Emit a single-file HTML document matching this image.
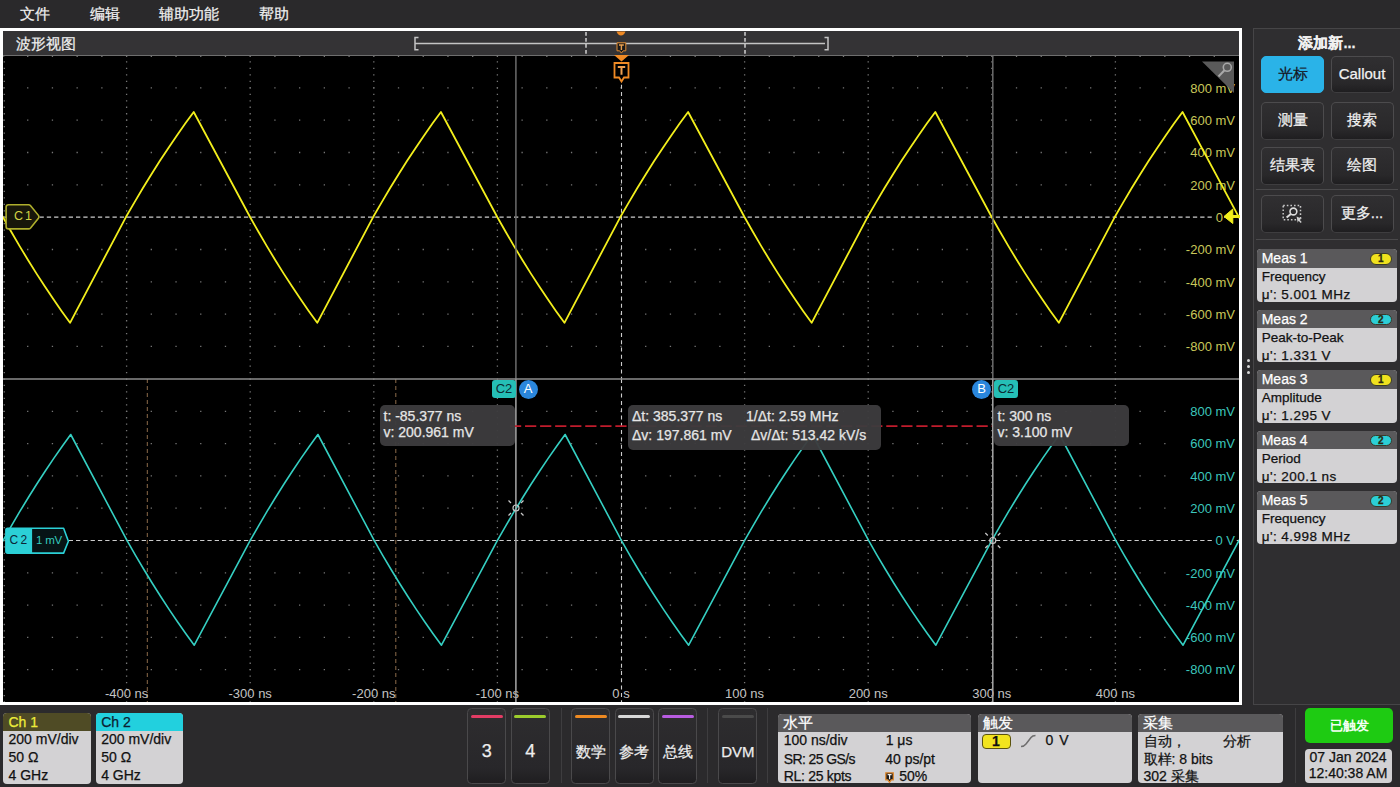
<!DOCTYPE html>
<html><head><meta charset="utf-8">
<style>
*{margin:0;padding:0;box-sizing:border-box}
html,body{width:1400px;height:787px;overflow:hidden;background:#2b2a2c;font-family:"Liberation Sans",sans-serif;color:#fff}
#rp,.card,.bb,.rb,#menu,#title .t{-webkit-text-stroke:0.25px currentColor}
.a{position:absolute}
#menu{left:0;top:0;width:1400px;height:28px;background:#2a292b}
#menu span{position:absolute;top:5px;font-size:15px;color:#f0f0f0;line-height:18px}
#wv{left:0;top:28px;width:1242px;height:677px;background:#fff}
#wvin{left:3px;top:31px;width:1236px;height:671px;background:#000}
#title{left:3px;top:31px;width:1236px;height:24.5px;background:#343335;border-bottom:1px solid #6e6e6e}
#title .t{position:absolute;left:13px;top:4px;font-size:15px;color:#eee;line-height:17px}
svg.plot{position:absolute;left:0;top:0;width:1400px;height:787px}
.yl{position:absolute;left:1136px;width:100px;text-align:right;font-size:13px;line-height:16px}
.yl span{background:#000;padding:0 1px 0 3px}
.xl{position:absolute;top:685.5px;width:80px;text-align:center;font-size:13px;line-height:16px;color:#c4c4c4}
#rp{left:1253px;top:28px;width:147px;height:677px;background:#2f2e30;border-left:1px solid #464547;border-top:1px solid #464547;border-bottom:1px solid #464547}
.btn{position:absolute;width:63px;height:37.7px;border-radius:5px;background:linear-gradient(#302f31,#29282a 75%,#1f1e20);border:1.5px solid #4c4b4d;border-bottom-color:#3e3d3f;font-size:15px;color:#f2f2f2;text-align:center;line-height:34px}
.card{position:absolute;border-radius:4px;background:#d3d2d4;overflow:hidden;color:#111}
.card .h{position:absolute;left:0;top:0;right:0;background:#5a595b;color:#fff}
.meas{left:3px;width:140px;height:52.6px}
.meas .h{height:18.3px;font-size:14px;line-height:18px;padding-left:4.7px}
.meas .l1{position:absolute;left:4.7px;top:19px;font-size:13.5px;line-height:17px}
.meas .l2{position:absolute;left:4.7px;top:37px;font-size:13.5px;line-height:17px;letter-spacing:0.45px}
.badge{position:absolute;right:5.5px;top:3.8px;width:21.5px;height:11.5px;border-radius:6px;font-size:10px;font-weight:bold;line-height:10px;text-align:center;color:#2a2a10;border:1px solid #3a3a2a}
.bb{position:absolute;top:708px;width:39px;height:75.5px;border-radius:4.5px;background:linear-gradient(#2e2d2f,#28272a 80%,#1f1e20);border:1.5px solid #4a494b;text-align:center;color:#eee}
.bb i{position:absolute;left:2.5px;right:2.5px;top:6px;height:3px;border-radius:1.5px}
.bb span{position:absolute;left:0;right:0;top:34px;font-size:15px;line-height:18px}
.sep{position:absolute;top:708px;width:1.5px;height:75px;background:#3e3d3f}
.info{position:absolute;top:713.5px;height:69.5px}
.info .h{height:18px;font-size:15px;line-height:18px;padding-left:5px}
.info .r{position:absolute;font-size:14px;line-height:18px}
.rb{position:absolute;border-radius:5px;background:rgba(60,59,61,0.96);color:#e6e6e6;font-size:14px;line-height:16px}
.tag{position:absolute;height:18.5px;font-size:13px;line-height:18.5px;text-align:center}
</style></head><body>
<div id="menu" class="a">
<span style="left:20px">文件</span>
<span style="left:90px">编辑</span>
<span style="left:159px">辅助功能</span>
<span style="left:259px">帮助</span>
</div>

<div id="wv" class="a"></div>
<div id="wvin" class="a"></div>
<div id="title" class="a"><div class="t">波形视图</div>
   <svg class="a" style="left:0;top:0" width="1236" height="25">
    <path d="M415.5 6.5 H412 V18.8 H415.5 M412 12.6 H822 M821.5 6.5 H825 V18.8 H821.5" stroke="#c4c4c4" stroke-width="1.5" fill="none"/>
    <line x1="583" y1="1" x2="583" y2="25" stroke="#d0d0d0" stroke-width="1.5" stroke-dasharray="3.8 2.2"/>
    <line x1="742" y1="1" x2="742" y2="25" stroke="#d0d0d0" stroke-width="1.5" stroke-dasharray="3.8 2.2"/>
    <path d="M613.5 0.5 L622.5 0.5 Q621 4.5 618 4.5 Q615 4.5 613.5 0.5 Z" fill="#f08a24"/>
    <path d="M614 11.8 h8.8 v8 h-2.6 l-1.8 2.3 l-1.8 -2.3 h-2.6 Z" fill="#1a1a1a" stroke="#e08a30" stroke-width="1"/>
    <path d="M616 14 h4.8 M618.4 14 v5" stroke="#e8a050" stroke-width="1.4"/>
   </svg>
</div>
<svg class="plot" viewBox="0 0 1400 787"><defs><clipPath id="cp"><rect x="3" y="55.5" width="1236" height="646.5"/></clipPath></defs><g clip-path="url(#cp)">
<line x1="3" y1="87.83" x2="1237" y2="87.83" stroke="#767676" stroke-width="1.3" stroke-dasharray="1.3 23.42" stroke-dashoffset="0.65"/>
<line x1="3" y1="120.16" x2="1237" y2="120.16" stroke="#767676" stroke-width="1.3" stroke-dasharray="1.3 23.42" stroke-dashoffset="0.65"/>
<line x1="3" y1="152.49" x2="1237" y2="152.49" stroke="#767676" stroke-width="1.3" stroke-dasharray="1.3 23.42" stroke-dashoffset="0.65"/>
<line x1="3" y1="184.82" x2="1237" y2="184.82" stroke="#767676" stroke-width="1.3" stroke-dasharray="1.3 23.42" stroke-dashoffset="0.65"/>
<line x1="3" y1="249.48" x2="1237" y2="249.48" stroke="#767676" stroke-width="1.3" stroke-dasharray="1.3 23.42" stroke-dashoffset="0.65"/>
<line x1="3" y1="281.81" x2="1237" y2="281.81" stroke="#767676" stroke-width="1.3" stroke-dasharray="1.3 23.42" stroke-dashoffset="0.65"/>
<line x1="3" y1="314.14" x2="1237" y2="314.14" stroke="#767676" stroke-width="1.3" stroke-dasharray="1.3 23.42" stroke-dashoffset="0.65"/>
<line x1="3" y1="346.47" x2="1237" y2="346.47" stroke="#767676" stroke-width="1.3" stroke-dasharray="1.3 23.42" stroke-dashoffset="0.65"/>
<line x1="126.6" y1="55.5" x2="126.6" y2="378.8" stroke="#767676" stroke-width="1.3" stroke-dasharray="1.3 5.17" stroke-dashoffset="0.65"/>
<line x1="250.2" y1="55.5" x2="250.2" y2="378.8" stroke="#767676" stroke-width="1.3" stroke-dasharray="1.3 5.17" stroke-dashoffset="0.65"/>
<line x1="373.8" y1="55.5" x2="373.8" y2="378.8" stroke="#767676" stroke-width="1.3" stroke-dasharray="1.3 5.17" stroke-dashoffset="0.65"/>
<line x1="497.4" y1="55.5" x2="497.4" y2="378.8" stroke="#767676" stroke-width="1.3" stroke-dasharray="1.3 5.17" stroke-dashoffset="0.65"/>
<line x1="744.6" y1="55.5" x2="744.6" y2="378.8" stroke="#767676" stroke-width="1.3" stroke-dasharray="1.3 5.17" stroke-dashoffset="0.65"/>
<line x1="868.2" y1="55.5" x2="868.2" y2="378.8" stroke="#767676" stroke-width="1.3" stroke-dasharray="1.3 5.17" stroke-dashoffset="0.65"/>
<line x1="991.8" y1="55.5" x2="991.8" y2="378.8" stroke="#767676" stroke-width="1.3" stroke-dasharray="1.3 5.17" stroke-dashoffset="0.65"/>
<line x1="1115.4" y1="55.5" x2="1115.4" y2="378.8" stroke="#767676" stroke-width="1.3" stroke-dasharray="1.3 5.17" stroke-dashoffset="0.65"/>
<line x1="3" y1="217.15" x2="1239" y2="217.15" stroke="#cccccc" stroke-width="1.1" stroke-dasharray="4.3 3"/>
<line x1="621.5" y1="55.5" x2="621.5" y2="378.8" stroke="#cccccc" stroke-width="1.1" stroke-dasharray="4 3.3"/>
<line x1="3" y1="411.3" x2="1237" y2="411.3" stroke="#767676" stroke-width="1.3" stroke-dasharray="1.3 23.42" stroke-dashoffset="0.65"/>
<line x1="3" y1="443.6" x2="1237" y2="443.6" stroke="#767676" stroke-width="1.3" stroke-dasharray="1.3 23.42" stroke-dashoffset="0.65"/>
<line x1="3" y1="475.9" x2="1237" y2="475.9" stroke="#767676" stroke-width="1.3" stroke-dasharray="1.3 23.42" stroke-dashoffset="0.65"/>
<line x1="3" y1="508.2" x2="1237" y2="508.2" stroke="#767676" stroke-width="1.3" stroke-dasharray="1.3 23.42" stroke-dashoffset="0.65"/>
<line x1="3" y1="572.8" x2="1237" y2="572.8" stroke="#767676" stroke-width="1.3" stroke-dasharray="1.3 23.42" stroke-dashoffset="0.65"/>
<line x1="3" y1="605.1" x2="1237" y2="605.1" stroke="#767676" stroke-width="1.3" stroke-dasharray="1.3 23.42" stroke-dashoffset="0.65"/>
<line x1="3" y1="637.4" x2="1237" y2="637.4" stroke="#767676" stroke-width="1.3" stroke-dasharray="1.3 23.42" stroke-dashoffset="0.65"/>
<line x1="3" y1="669.7" x2="1237" y2="669.7" stroke="#767676" stroke-width="1.3" stroke-dasharray="1.3 23.42" stroke-dashoffset="0.65"/>
<line x1="126.6" y1="379" x2="126.6" y2="702" stroke="#767676" stroke-width="1.3" stroke-dasharray="1.3 5.16" stroke-dashoffset="0.65"/>
<line x1="250.2" y1="379" x2="250.2" y2="702" stroke="#767676" stroke-width="1.3" stroke-dasharray="1.3 5.16" stroke-dashoffset="0.65"/>
<line x1="373.8" y1="379" x2="373.8" y2="702" stroke="#767676" stroke-width="1.3" stroke-dasharray="1.3 5.16" stroke-dashoffset="0.65"/>
<line x1="497.4" y1="379" x2="497.4" y2="702" stroke="#767676" stroke-width="1.3" stroke-dasharray="1.3 5.16" stroke-dashoffset="0.65"/>
<line x1="744.6" y1="379" x2="744.6" y2="702" stroke="#767676" stroke-width="1.3" stroke-dasharray="1.3 5.16" stroke-dashoffset="0.65"/>
<line x1="868.2" y1="379" x2="868.2" y2="702" stroke="#767676" stroke-width="1.3" stroke-dasharray="1.3 5.16" stroke-dashoffset="0.65"/>
<line x1="991.8" y1="379" x2="991.8" y2="702" stroke="#767676" stroke-width="1.3" stroke-dasharray="1.3 5.16" stroke-dashoffset="0.65"/>
<line x1="1115.4" y1="379" x2="1115.4" y2="702" stroke="#767676" stroke-width="1.3" stroke-dasharray="1.3 5.16" stroke-dashoffset="0.65"/>
<line x1="3" y1="540.5" x2="1239" y2="540.5" stroke="#cccccc" stroke-width="1.1" stroke-dasharray="4.3 3"/>
<line x1="621.5" y1="379" x2="621.5" y2="702" stroke="#cccccc" stroke-width="1.1" stroke-dasharray="4 3.3"/>
<line x1="3" y1="56.3" x2="1237" y2="56.3" stroke="#767676" stroke-width="1.3" stroke-dasharray="1.3 23.42" stroke-dashoffset="0.65"/>
<line x1="4.3" y1="55.5" x2="4.3" y2="378.8" stroke="#767676" stroke-width="1.3" stroke-dasharray="1.3 5.17" stroke-dashoffset="0.65"/>
<line x1="4.3" y1="379" x2="4.3" y2="702" stroke="#767676" stroke-width="1.3" stroke-dasharray="1.3 5.16" stroke-dashoffset="0.65"/>
<line x1="147.3" y1="379.0" x2="147.3" y2="702.0" stroke="#8c6c4a" stroke-width="1" stroke-dasharray="4 3"/>
<line x1="395.8" y1="379.0" x2="395.8" y2="702.0" stroke="#8c6c4a" stroke-width="1" stroke-dasharray="4 3"/>

</g></svg>
<div class="yl" style="top:80.53px;color:#c9c85a"><span>800 mV</span></div>
<div class="yl" style="top:112.86px;color:#c9c85a"><span>600 mV</span></div>
<div class="yl" style="top:145.19px;color:#c9c85a"><span>400 mV</span></div>
<div class="yl" style="top:177.52px;color:#c9c85a"><span>200 mV</span></div>
<div class="yl" style="top:209.85px;color:#c9c85a" ><span style="margin-right:12px">0</span></div>
<div class="yl" style="top:242.18px;color:#c9c85a"><span>-200 mV</span></div>
<div class="yl" style="top:274.51px;color:#c9c85a"><span>-400 mV</span></div>
<div class="yl" style="top:306.84px;color:#c9c85a"><span>-600 mV</span></div>
<div class="yl" style="top:339.17px;color:#c9c85a"><span>-800 mV</span></div>
<div class="yl" style="top:404px;color:#3cc6bc"><span>800 mV</span></div>
<div class="yl" style="top:436.3px;color:#3cc6bc"><span>600 mV</span></div>
<div class="yl" style="top:468.6px;color:#3cc6bc"><span>400 mV</span></div>
<div class="yl" style="top:500.9px;color:#3cc6bc"><span>200 mV</span></div>
<div class="yl" style="top:533.2px;color:#3cc6bc"><span>0 V</span></div>
<div class="yl" style="top:565.5px;color:#3cc6bc"><span>-200 mV</span></div>
<div class="yl" style="top:597.8px;color:#3cc6bc"><span>-400 mV</span></div>
<div class="yl" style="top:630.1px;color:#3cc6bc"><span>-600 mV</span></div>
<div class="yl" style="top:662.4px;color:#3cc6bc"><span>-800 mV</span></div>
<div class="xl" style="left:86.6px">-400 ns</div>
<div class="xl" style="left:210.2px">-300 ns</div>
<div class="xl" style="left:333.8px">-200 ns</div>
<div class="xl" style="left:457.4px">-100 ns</div>
<div class="xl" style="left:581px">0 s</div>
<div class="xl" style="left:704.6px">100 ns</div>
<div class="xl" style="left:828.2px">200 ns</div>
<div class="xl" style="left:951.8px">300 ns</div>
<div class="xl" style="left:1075.4px">400 ns</div>
<svg class="plot" viewBox="0 0 1400 787"><g clip-path="url(#cp)">

<polyline fill="none" stroke="#f2ee1c" stroke-width="1.8" stroke-linejoin="round" points="1,213.57 3,217.3 11.39,232.05 19.76,246.35 28.15,260.22 36.52,273.63 44.91,286.59 53.29,299.1 61.67,311.17 70.05,322.8 125.8,217.3 134.3,202.58 142.78,188.3 151.28,174.46 159.76,161.08 168.26,148.14 176.74,135.65 185.24,123.6 193.72,112 250.2,217.3 258.59,232.05 266.96,246.35 275.35,260.22 283.72,273.63 292.11,286.59 300.49,299.1 308.87,311.17 317.25,322.8 373,217.3 381.5,202.58 389.98,188.3 398.48,174.46 406.96,161.08 415.46,148.14 423.94,135.65 432.44,123.6 440.92,112 497.4,217.3 505.79,232.05 514.16,246.35 522.55,260.22 530.92,273.63 539.31,286.59 547.69,299.1 556.07,311.17 564.45,322.8 620.2,217.3 628.7,202.58 637.18,188.3 645.68,174.46 654.16,161.08 662.66,148.14 671.14,135.65 679.64,123.6 688.12,112 744.6,217.3 752.99,232.05 761.36,246.35 769.75,260.22 778.12,273.63 786.51,286.59 794.89,299.1 803.27,311.17 811.65,322.8 867.4,217.3 875.9,202.58 884.38,188.3 892.88,174.46 901.36,161.08 909.86,148.14 918.34,135.65 926.84,123.6 935.32,112 991.8,217.3 1000.19,232.05 1008.56,246.35 1016.95,260.22 1025.32,273.63 1033.71,286.59 1042.09,299.1 1050.47,311.17 1058.85,322.8 1114.6,217.3 1123.1,202.58 1131.58,188.3 1140.08,174.46 1148.56,161.08 1157.06,148.14 1165.54,135.65 1174.04,123.6 1182.52,112 1239,217.3 1241,220.82"/>
<polyline fill="none" stroke="#35cfc2" stroke-width="1.6" stroke-linejoin="round" points="1,544.26 2.9,540.7 11.38,525.85 19.85,511.45 28.34,497.5 36.81,484 45.29,470.95 53.76,458.35 62.24,446.2 70.71,434.5 127.1,540.7 135.5,555.31 143.89,569.48 152.29,583.21 160.68,596.49 169.08,609.34 177.47,621.73 185.87,633.68 194.26,645.2 250.1,540.7 258.58,525.85 267.05,511.45 275.54,497.5 284.01,484 292.49,470.95 300.96,458.35 309.44,446.2 317.91,434.5 374.3,540.7 382.7,555.31 391.09,569.48 399.49,583.21 407.88,596.49 416.28,609.34 424.67,621.73 433.07,633.68 441.46,645.2 497.3,540.7 505.78,525.85 514.25,511.45 522.74,497.5 531.21,484 539.69,470.95 548.16,458.35 556.64,446.2 565.11,434.5 621.5,540.7 629.9,555.31 638.29,569.48 646.69,583.21 655.08,596.49 663.48,609.34 671.87,621.73 680.27,633.68 688.66,645.2 744.5,540.7 752.98,525.85 761.45,511.45 769.94,497.5 778.41,484 786.89,470.95 795.36,458.35 803.84,446.2 812.31,434.5 868.7,540.7 877.1,555.31 885.49,569.48 893.89,583.21 902.28,596.49 910.68,609.34 919.07,621.73 927.47,633.68 935.86,645.2 991.7,540.7 1000.18,525.85 1008.65,511.45 1017.14,497.5 1025.61,484 1034.09,470.95 1042.56,458.35 1051.04,446.2 1059.51,434.5 1115.9,540.7 1124.3,555.31 1132.69,569.48 1141.09,583.21 1149.48,596.49 1157.88,609.34 1166.27,621.73 1174.67,633.68 1183.06,645.2 1238.9,540.7 1241,537.02"/>
<line x1="515.9" y1="55.5" x2="515.9" y2="379" stroke="#6c6c6c" stroke-width="1.5"/>
<line x1="515.9" y1="379" x2="515.9" y2="702.0" stroke="#a8a8a8" stroke-width="1.5"/>
<line x1="992.8" y1="55.5" x2="992.8" y2="379" stroke="#6c6c6c" stroke-width="1.5"/>
<line x1="992.8" y1="379" x2="992.8" y2="702.0" stroke="#a8a8a8" stroke-width="1.5"/>
<line x1="510" y1="426.1" x2="992" y2="426.1" stroke="#c01c2c" stroke-width="1.6" stroke-dasharray="11.2 3.85"/>
<line x1="3.0" y1="379" x2="1239.0" y2="379" stroke="#8c8c8c" stroke-width="1.6"/>
<g stroke="#c8c8c8" stroke-width="1.2" fill="none"><circle cx="516" cy="508" r="3"/><line x1="521" y1="513" x2="523.5" y2="515.5"/><line x1="521" y1="503" x2="523.5" y2="500.5"/><line x1="511" y1="513" x2="508.5" y2="515.5"/><line x1="511" y1="503" x2="508.5" y2="500.5"/></g>
<g stroke="#c8c8c8" stroke-width="1.2" fill="none"><circle cx="992.8" cy="540.5" r="3"/><line x1="997.8" y1="545.5" x2="1000.3" y2="548"/><line x1="997.8" y1="535.5" x2="1000.3" y2="533"/><line x1="987.8" y1="545.5" x2="985.3" y2="548"/><line x1="987.8" y1="535.5" x2="985.3" y2="533"/></g>
</g></svg>

<!-- trigger marker in plot -->
<svg class="a" style="left:600px;top:50px" width="40" height="40">
 <path d="M14 5 L29 5 L21.5 11.5 Z" fill="#f08a24"/>
 <path d="M14.5 13 h14 v14.5 h-4.5 l-2.5 4 l-2.5 -4 h-4.5 Z" fill="#000" stroke="#f08a24" stroke-width="1.8"/>
 <path d="M17.8 17 h7.4 M21.5 17 v7.8" stroke="#f0a050" stroke-width="2"/>
</svg>

<!-- zoom corner icon -->
<svg class="a" style="left:1200px;top:60px" width="40" height="36">
 <path d="M2 1.5 H34 V33 Z" fill="#5a5a5a"/>
 <circle cx="27.3" cy="7.3" r="4" fill="none" stroke="#a8a8a8" stroke-width="1.6"/>
 <line x1="24.5" y1="10.3" x2="18.5" y2="16.5" stroke="#a8a8a8" stroke-width="2"/>
</svg>

<!-- C1 marker -->
<svg class="a" style="left:0;top:198px" width="50" height="38">
 <path d="M8.5 6.8 H28.5 Q29.8 6.8 30.6 7.7 L38.6 17.6 Q39.2 18.8 38.6 20 L30.6 30 Q29.8 30.9 28.5 30.9 H8.5 Q6.1 30.9 6.1 28.5 V9.2 Q6.1 6.8 8.5 6.8 Z" fill="#18170a" stroke="#aeae2c" stroke-width="1.6"/>
 <text x="14" y="22.3" style="font-family:'Liberation Sans',sans-serif" font-size="12.5" fill="#d4d444" letter-spacing="-0.8">C 1</text>
</svg>
<!-- right 0 marker top -->
<svg class="a" style="left:1220px;top:206px" width="22" height="22">
 <path d="M4 10.5 L12.8 3 V17.5 Z" fill="#f2ee1c" stroke="#f2ee1c" stroke-width="1" stroke-linejoin="round"/>
 <rect x="12" y="9" width="8" height="3" fill="#f2ee1c"/>
</svg>
<!-- C2 marker -->
<svg class="a" style="left:0;top:520px" width="75" height="40">
 <path d="M7.7 8.2 H63.6 L68.4 21.2 L63.6 33.1 H7.7 Q5.9 33.1 5.9 31.3 V10 Q5.9 8.2 7.7 8.2 Z" fill="#071416" stroke="#2bd0d6" stroke-width="1.6" stroke-linejoin="round"/>
 <path d="M7.7 8.2 H32.1 V33.1 H7.7 Q5.9 33.1 5.9 31.3 V10 Q5.9 8.2 7.7 8.2 Z" fill="#2bd0d6"/>
 <text x="9.6" y="23.8" style="font-family:'Liberation Sans',sans-serif" font-size="12" fill="#0c2636" letter-spacing="-0.6">C 2</text>
 <text x="36" y="23.8" style="font-family:'Liberation Sans',sans-serif" font-size="11.5" fill="#34cbbd" letter-spacing="-0.2">1 mV</text>
</svg>

<!-- cursor tags -->
<div class="tag" style="left:492px;top:379.5px;width:24px;background:#25bfb6;border-radius:3px;color:#0d2b33">C2</div>
<div class="tag" style="left:518.5px;top:380px;width:19px;background:#2a86dc;border-radius:9.5px;color:#fff">A</div>
<div class="tag" style="left:972px;top:380px;width:19px;background:#2a86dc;border-radius:9.5px;color:#fff">B</div>
<div class="tag" style="left:994px;top:379.5px;width:24px;background:#25bfb6;border-radius:3px;color:#0d2b33">C2</div>

<!-- readouts -->
<div class="rb" style="left:380px;top:405px;width:134.5px;height:40.5px"><div class="a" style="left:3.5px;top:2.5px">t: -85.377 ns</div><div class="a" style="left:3.5px;top:18.5px">v: 200.961 mV</div></div>
<div class="rb" style="left:628px;top:404.8px;width:252.5px;height:45px"><div class="a" style="left:4px;top:3.4px">Δt: 385.377 ns</div><div class="a" style="left:118px;top:3.4px">1/Δt: 2.59 MHz</div><div class="a" style="left:4px;top:22.3px">Δv: 197.861 mV</div><div class="a" style="left:123px;top:22.3px">Δv/Δt: 513.42 kV/s</div></div>
<div class="rb" style="left:994px;top:405px;width:134.5px;height:40.5px"><div class="a" style="left:3.5px;top:2.5px">t: 300 ns</div><div class="a" style="left:3.5px;top:18.5px">v: 3.100 mV</div></div>

<!-- right panel -->
<div id="rp" class="a">
 <div class="a" style="left:0;top:5px;width:146px;text-align:center;font-size:14.5px;font-weight:bold;line-height:18px;color:#f0f0f0">添加新...</div>
 <div class="btn" style="left:7px;top:26.7px;background:#2ab3e8;border-color:#2ab3e8;color:#16161e">光标</div>
 <div class="btn" style="left:76.5px;top:26.7px">Callout</div>
 <div class="btn" style="left:7px;top:72.9px">测量</div>
 <div class="btn" style="left:76.5px;top:72.9px">搜索</div>
 <div class="btn" style="left:7px;top:118.2px">结果表</div>
 <div class="btn" style="left:76.5px;top:118.2px">绘图</div>
 <div class="a" style="left:2px;top:160px;width:142px;height:1.3px;background:#4a494b"></div>
 <div class="btn" style="left:7px;top:166.4px"></div>
 <div class="btn" style="left:76.5px;top:166.4px">更多...</div>
 <div class="a" style="left:2px;top:209.7px;width:142px;height:1.3px;background:#4a494b"></div>
 <svg class="a" style="left:24px;top:172px" width="30" height="26">
  <rect x="5.2" y="4.4" width="17.3" height="14.3" fill="none" stroke="#c8c8c8" stroke-width="1.5" stroke-dasharray="1.6 2"/>
  <circle cx="15.4" cy="10.5" r="3.4" fill="none" stroke="#dcdcdc" stroke-width="1.6"/>
  <line x1="12.8" y1="13" x2="8.6" y2="16.6" stroke="#dcdcdc" stroke-width="2"/>
  <path d="M18.6 15.6 l5.2 2.2 l-2.2 0.9 l2.1 2.4 l-1 1 l-2.1 -2.4 l-0.9 2.1 Z" fill="#d0d0d0"/>
 </svg>
 <div class="card meas" style="top:220.4px"><div class="h">Meas 1<div class="badge" style="background:#f0e21e">1</div></div><div class="l1">Frequency</div><div class="l2">μ': 5.001 MHz</div></div>
 <div class="card meas" style="top:280.9px"><div class="h">Meas 2<div class="badge" style="background:#2ccfd6">2</div></div><div class="l1">Peak-to-Peak</div><div class="l2">μ': 1.331 V</div></div>
 <div class="card meas" style="top:341.4px"><div class="h">Meas 3<div class="badge" style="background:#f0e21e">1</div></div><div class="l1">Amplitude</div><div class="l2">μ': 1.295 V</div></div>
 <div class="card meas" style="top:401.9px"><div class="h">Meas 4<div class="badge" style="background:#2ccfd6">2</div></div><div class="l1">Period</div><div class="l2">μ': 200.1 ns</div></div>
 <div class="card meas" style="top:462.4px"><div class="h">Meas 5<div class="badge" style="background:#2ccfd6">2</div></div><div class="l1">Frequency</div><div class="l2">μ': 4.998 MHz</div></div>
</div>
<!-- handle dots -->
<div class="a" style="left:1246.6px;top:358.6px;width:3.2px;height:3.2px;border-radius:2px;background:#d8d8d8"></div>
<div class="a" style="left:1246.6px;top:364.7px;width:3.2px;height:3.2px;border-radius:2px;background:#d8d8d8"></div>
<div class="a" style="left:1246.6px;top:370.8px;width:3.2px;height:3.2px;border-radius:2px;background:#d8d8d8"></div>

<!-- bottom bar -->
<div class="card" style="left:3px;top:712.5px;width:87.5px;height:71px"><div class="h" style="height:18.5px;background:#4f4b25;color:#ecec3a;font-size:14px;line-height:19px;padding-left:5.5px">Ch 1</div>
 <div class="a" style="left:5.5px;top:18.9px;font-size:14px;line-height:17.9px">200 mV/div<br>50 Ω<br>4 GHz</div></div>
<div class="card" style="left:95.7px;top:712.5px;width:87.5px;height:71px"><div class="h" style="height:18.5px;background:#22d0de;color:#0b2030;font-size:14px;line-height:19px;padding-left:5.5px">Ch 2</div>
 <div class="a" style="left:5.5px;top:18.9px;font-size:14px;line-height:17.9px">200 mV/div<br>50 Ω<br>4 GHz</div></div>

<div class="bb" style="left:467.3px"><i style="background:#e23c64"></i><span style="font-size:18px;top:32.5px">3</span></div>
<div class="bb" style="left:510.7px"><i style="background:#9ccc2c"></i><span style="font-size:18px;top:32.5px">4</span></div>
<div class="sep" style="left:560.5px"></div>
<div class="bb" style="left:571.3px"><i style="background:#ee8a22"></i><span>数学</span></div>
<div class="bb" style="left:614.7px"><i style="background:#d8d8d8"></i><span>参考</span></div>
<div class="bb" style="left:658.4px"><i style="background:#b85ce0"></i><span>总线</span></div>
<div class="sep" style="left:706.8px"></div>
<div class="bb" style="left:718.3px"><i style="background:#4a4a4a"></i><span>DVM</span></div>
<div class="sep" style="left:766.7px"></div>

<div class="card info" style="left:778.2px;width:192.8px"><div class="h">水平</div>
 <div class="r" style="left:5.5px;top:17.2px">100 ns/div</div><div class="r" style="left:107.5px;top:17.2px">1 μs</div>
 <div class="r" style="left:5.5px;top:36px;letter-spacing:-0.6px">SR: 25 GS/s</div><div class="r" style="left:107px;top:36px">40 ps/pt</div>
 <div class="r" style="left:5.5px;top:53.5px;letter-spacing:-0.3px">RL: 25 kpts</div><div class="r" style="left:121px;top:53.5px">50%</div>
 <svg class="a" style="left:106.5px;top:58px" width="10" height="12"><path d="M0.8 0.8 h7.5 v7 h-2 l-1.75 2.5 l-1.75 -2.5 h-2 Z" fill="#1a1a1a" stroke="#e08a30" stroke-width="1.3"/><path d="M2.6 2.7 h4 M4.6 2.7 v4.5" stroke="#eee" stroke-width="1.2"/></svg>
</div>

<div class="card info" style="left:977.5px;width:154.5px"><div class="h">触发</div>
 <div class="a" style="left:4px;top:20px;width:29px;height:15px;border-radius:4px;background:#f2e41e;border:1px solid #5a5210;color:#111;font-size:14px;line-height:12px;text-align:center;font-weight:bold">1</div>
 <svg class="a" style="left:42px;top:20.3px" width="18" height="14"><path d="M1 12.5 Q4 12.5 6 10 L11 3.5 Q12.5 1.5 15.5 1.5" fill="none" stroke="#6e6e6e" stroke-width="1.5"/></svg>
 <div class="r" style="left:68px;top:17px;letter-spacing:1px">0 V</div>
</div>

<div class="card info" style="left:1138px;width:144.5px"><div class="h">采集</div>
 <div class="r" style="left:5.5px;top:18px">自动，</div><div class="r" style="left:84.5px;top:18px">分析</div>
 <div class="r" style="left:5.5px;top:36px">取样: 8 bits</div>
 <div class="r" style="left:5.5px;top:53.5px">302 采集</div>
</div>
<div class="sep" style="left:1294.5px"></div>

<div class="a" style="left:1305px;top:707.7px;width:88px;height:35.6px;border-radius:5px;background:#1ecb12;font-size:13px;font-weight:bold;line-height:35px;text-align:center;color:#f4fff4">已触发</div>
<div class="card" style="left:1304.5px;top:748.6px;width:87px;height:34.3px;text-align:center;font-size:14px;line-height:16px;color:#111;padding-top:0px">07 Jan 2024<br>12:40:38 AM</div>

</body></html>
